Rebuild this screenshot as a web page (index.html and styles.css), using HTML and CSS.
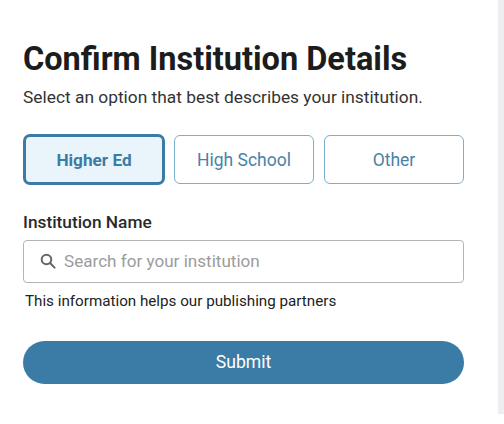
FILE: index.html
```html
<!DOCTYPE html>
<html lang="en">
<head>
<meta charset="utf-8">
<title>Confirm Institution Details</title>
<link rel="stylesheet" href="styles.css">
</head>
<body>
<div class="page">
  <main class="panel">
    <h1 class="title">Confirm Institution Details</h1>
    <p class="subtitle">Select an option that best describes your institution.</p>
    <div class="options">
      <button class="option option-active" type="button">Higher Ed</button>
      <button class="option" type="button">High School</button>
      <button class="option" type="button">Other</button>
    </div>
    <label class="label" for="inst">Institution Name</label>
    <div class="search">
      <svg class="search-icon" width="18" height="18" viewBox="0 0 18 18" fill="none" stroke="#666" stroke-width="2"><circle cx="7.5" cy="7.5" r="4.8"/><path d="M11 11l4.6 4.6" stroke-linecap="round"/></svg>
      <input id="inst" class="search-input" type="text" placeholder="Search for your institution">
    </div>
    <p class="help">This information helps our publishing partners</p>
    <button class="submit" type="button">Submit</button>
  </main>
  <div class="rail"></div>
</div>
</body>
</html>
```
FILE: styles.css
```css
* { box-sizing: border-box; }
html, body { margin: 0; padding: 0; background: #fff; }
body { font-family: Roboto, "Liberation Sans", sans-serif; }
.page { display: flex; width: 504px; height: 424px; }
.panel { width: 498px; flex: none; padding: 41px 34px 0 23px; }
.rail { flex: 1; height: 414px; background: #eeeef0; }
.title { margin: 0; font-size: 32.5px; line-height: 36px; font-weight: 700; color: #1c1c1c; }
.subtitle { margin: 9px 0 0; font-size: 17.35px; line-height: 22px; color: #333; }
.options { display: grid; grid-template-columns: repeat(3, 140px); gap: 10px; margin-top: 27px; padding-left: 1px; }
.option { height: 49px; padding: 0; background: #fff; border: 1px solid #78b0d0; border-radius: 6px; font: 400 17.5px Roboto, sans-serif; color: #4a82a8; }
.option-active { border: 2px solid #3b7ca6; box-shadow: 0 0 0 1px #3b7ca6; background: #eaf5fb; font-weight: 700; font-size: 17.2px; color: #3b7ca6; }
.label { display: block; margin-top: 28px; font-size: 17.3px; line-height: 20px; font-weight: 500; color: #2a2a2a; }
.search { display: flex; align-items: center; gap: 7px; height: 43px; margin-top: 8px; padding: 0 0 1px 15px; border: 1px solid #b4b4b4; border-radius: 4px; }
.search-icon { flex: none; }
.search-input { flex: 1; min-width: 0; border: 0; outline: 0; padding: 0; font: 400 17.1px Roboto, sans-serif; color: #333; background: transparent; }
.search-input::placeholder { color: #9c9c9c; opacity: 1; }
.help { margin: 9px 0 0 2px; font-size: 15.2px; line-height: 18px; color: #222; }
.submit { display: block; width: 100%; height: 43px; margin-top: 31px; padding: 0 0 2px; border: 0; border-radius: 22px; background: #3b7ca6; color: #fff; font: 400 17.6px Roboto, sans-serif; }
```
